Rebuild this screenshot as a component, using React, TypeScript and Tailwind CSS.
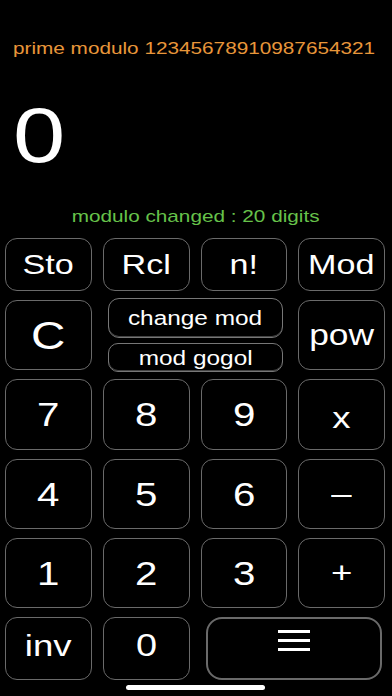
import type { ReactNode } from "react";

const font = { fontFamily: '"Liberation Sans", Arial, sans-serif' };

function Wide({ children, left = false }: { children: ReactNode; left?: boolean }) {
  return (
    <span
      className={`inline-block scale-x-[1.22] ${left ? "origin-left" : "origin-center"}`}
    >
      {children}
    </span>
  );
}

function Key({
  label,
  size = "text-[33px]",
  className = "",
}: {
  label: ReactNode;
  size?: string;
  className?: string;
}) {
  return (
    <button
      type="button"
      className={`flex items-center justify-center rounded-[12px] border-[1.5px] border-[#6a6a6a] bg-black leading-none text-white ${size} ${className}`}
    >
      <Wide>{label}</Wide>
    </button>
  );
}

export default function App() {
  return (
    <div
      className="relative flex h-[696px] w-[392px] flex-col overflow-hidden bg-black pt-[39px]"
      style={font}
    >
      {/* header / display */}
      <div className="h-[20px] whitespace-nowrap pl-[13px] text-[17px] leading-[20px] text-[#e8963a]">
        <Wide left>prime modulo 12345678910987654321</Wide>
      </div>
      <div className="mt-[38px] h-[77px] pl-[13px] text-[77px] leading-none text-white">
        <Wide left>0</Wide>
      </div>
      <div className="mt-[33px] h-[20px] whitespace-nowrap text-center text-[17px] leading-[20px] text-[#66c24a]">
        <Wide>modulo changed : 20 digits</Wide>
      </div>

      {/* keypad */}
      <div className="mt-[11px] grid grid-cols-4 grid-rows-[53px_70px_71px_70px_70px_63px] gap-x-[11px] gap-y-[9px] pl-[5px] pr-[7px]">
        <Key label="Sto" size="text-[28px]" />
        <Key label="Rcl" size="text-[28px]" />
        <Key label="n!" size="text-[28px]" />
        <Key label="Mod" size="text-[28px]" />

        <Key label="C" size="text-[39px]" />
        <div className="col-span-2 -my-[2px] flex flex-col gap-[5px] pl-[5px] pr-[4px]">
          <button
            type="button"
            className="flex h-[40px] items-center justify-center rounded-[11px] border-[1.5px] border-[#777] bg-black text-[20px] leading-none text-white shadow-[inset_0_-1px_0_#444]"
          >
            <Wide>change mod</Wide>
          </button>
          <button
            type="button"
            className="flex h-[29px] items-center justify-center rounded-[10px] border-[1.5px] border-[#777] bg-black text-[20px] leading-none text-white shadow-[inset_0_-1px_0_#444]"
          >
            <Wide>mod gogol</Wide>
          </button>
        </div>
        <Key label="pow" size="text-[29px]" />

        <Key label="7" />
        <Key label="8" />
        <Key label="9" />
        <Key label="x" size="text-[30px]" className="pt-[6px]" />

        <Key label="4" />
        <Key label="5" />
        <Key label="6" />
        <Key label="–" size="text-[30px]" />

        <Key label="1" />
        <Key label="2" />
        <Key label="3" />
        <Key label="+" size="text-[30px]" />

        <Key label="inv" size="text-[30px]" className="pb-[6px]" />
        <Key label="0" size="text-[31px]" className="pb-[6px]" />
        <button
          type="button"
          className="col-span-2 ml-[5px] mr-[3px] flex items-center justify-center rounded-[16px] border-2 border-[#6a6a6a] bg-black pb-[16px]"
        >
          <span className="flex w-[32px] flex-col gap-[5.5px]">
            <span className="h-[3.5px] bg-white" />
            <span className="h-[3.5px] bg-white" />
            <span className="h-[3.5px] bg-white" />
          </span>
        </button>
      </div>

      {/* home indicator */}
      <div className="mx-auto mt-[5px] h-[5px] w-[139px] translate-x-[-1px] rounded-full bg-white" />
    </div>
  );
}
